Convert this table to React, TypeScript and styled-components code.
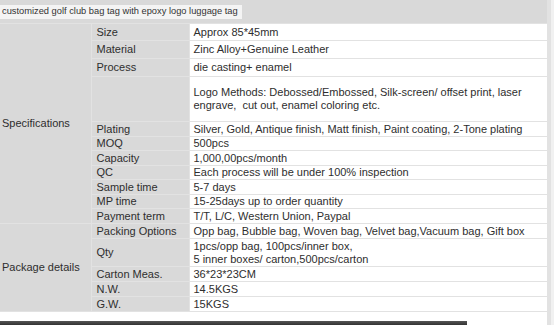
import React from "react";
import styled, { createGlobalStyle } from "styled-components";

const GlobalStyle = createGlobalStyle`
  html, body {
    margin: 0;
    padding: 0;
    background: #fff;
  }
  body {
    font-family: "Liberation Sans", Arial, sans-serif;
    color: #2e2e2e;
  }
`;

const StyledPage = styled.div`
  display: flex;
  width: 554px;
  height: 325px;
  overflow: hidden;
`;

const StyledMain = styled.div`
  display: flex;
  flex-direction: column;
  width: 547px;
`;

const StyledStrip = styled.div`
  width: 7px;
  background: linear-gradient(to right, #e2e2e2 0, #e2e2e2 4px, #f1f1f1 4px);
`;

const StyledHead = styled.div`
  height: 23px;
  background: #d9d9d9;
  & > span {
    display: inline-block;
    height: 14px;
    line-height: 13px;
    padding: 0 4px 0 2px;
    background: #f4f4f4;
    font-size: 9.3px;
    color: #333;
  }
`;

const StyledTable = styled.table`
  width: 547px;
  border-collapse: collapse;
  table-layout: fixed;
  font-size: 11px;
  line-height: 13px;
  & td {
    border: 1px solid #e2e2e2;
    padding: 0 4px;
    vertical-align: middle;
    white-space: nowrap;
  }
`;

const StyledRow = styled.tr<{ $h: number }>`
  height: ${(p) => p.$h}px;
`;

const StyledGroup = styled.td`
  background: #d9d9d9;
  padding-left: 2px !important;
  border-left: none !important;
`;

const StyledLabel = styled.td`
  background: #d9d9d9;
  padding-left: 5px !important;
`;

const StyledValue = styled.td`
  background: #fff;
  border-right: none !important;
`;

const StyledFoot = styled.div`
  flex: 1;
  background: #fff;
  display: flex;
  flex-direction: column;
  justify-content: flex-end;
  & > div {
    width: 467px;
    height: 4px;
    background: linear-gradient(#555, #333);
  }
`;

type Item = { label: string; value: React.ReactNode; h: number };

const specs: Item[] = [
  { label: "Size", value: "Approx 85*45mm", h: 17 },
  { label: "Material", value: "Zinc Alloy+Genuine Leather", h: 18 },
  { label: "Process", value: "die casting+ enamel", h: 18 },
  {
    label: "",
    value: (
      <>
        Logo Methods: Debossed/Embossed, Silk-screen/ offset print, laser
        <br />
        engrave,&nbsp; cut out, enamel coloring etc.
      </>
    ),
    h: 45,
  },
  {
    label: "Plating",
    value:
      "Silver, Gold, Antique finish, Matt finish, Paint coating, 2-Tone plating",
    h: 15,
  },
  { label: "MOQ", value: "500pcs", h: 14 },
  { label: "Capacity", value: "1,000,00pcs/month", h: 15 },
  { label: "QC", value: "Each process will be under 100% inspection", h: 14 },
  { label: "Sample time", value: "5-7 days", h: 15 },
  { label: "MP time", value: "15-25days up to order quantity", h: 14 },
  { label: "Payment term", value: "T/T, L/C, Western Union, Paypal", h: 15 },
];

const packing: Item[] = [
  {
    label: "Packing Options",
    value:
      "Opp bag, Bubble bag, Woven bag, Velvet bag,Vacuum bag, Gift box",
    h: 15,
  },
  {
    label: "Qty",
    value: (
      <>
        1pcs/opp bag, 100pcs/inner box,
        <br />5 inner boxes/ carton,500pcs/carton
      </>
    ),
    h: 28,
  },
  { label: "Carton Meas.", value: "36*23*23CM", h: 15 },
  { label: "N.W.", value: "14.5KGS", h: 15 },
  { label: "G.W.", value: "15KGS", h: 15 },
];

const Group = ({ title, items }: { title: string; items: Item[] }) => (
  <>
    {items.map((it, i) => (
      <StyledRow key={i} $h={it.h}>
        {i === 0 && (
          <StyledGroup rowSpan={items.length}>{title}</StyledGroup>
        )}
        <StyledLabel>{it.label}</StyledLabel>
        <StyledValue>{it.value}</StyledValue>
      </StyledRow>
    ))}
  </>
);

const App = () => {
  return (
    <StyledPage>
      <GlobalStyle />
      <StyledMain>
        <StyledHead>
          <span>customized golf club bag tag with epoxy logo luggage tag</span>
        </StyledHead>
        <StyledTable>
          <colgroup>
            <col style={{ width: 91 }} />
            <col style={{ width: 98 }} />
            <col />
          </colgroup>
          <tbody>
            <Group title="Specifications" items={specs} />
            <Group title="Package details" items={packing} />
          </tbody>
        </StyledTable>
        <StyledFoot>
          <div />
        </StyledFoot>
      </StyledMain>
      <StyledStrip />
    </StyledPage>
  );
};

export default App;
